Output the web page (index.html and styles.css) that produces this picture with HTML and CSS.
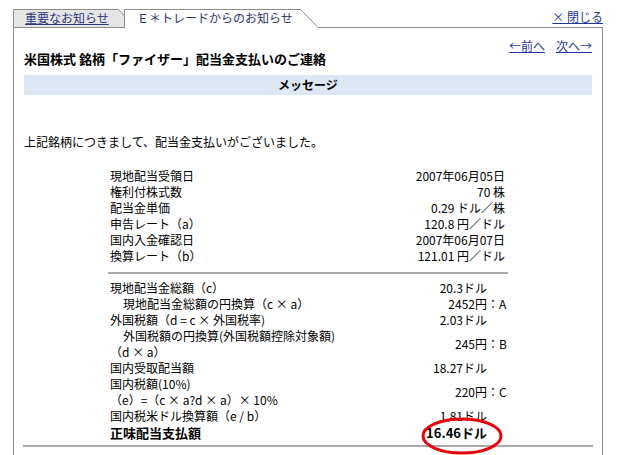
FILE: index.html
```html
<!DOCTYPE html>
<html lang="ja">
<head>
<meta charset="utf-8">
<title>お知らせ</title>
<link rel="stylesheet" href="styles.css">
</head>
<body>
<div class="page">
  <div class="tabbar">
    <div class="tab tab-off">
      <svg class="tab-shape" width="112" height="19" viewBox="0 0 112 19"><polygon points="0.5,18.5 0.5,0.5 105.5,0.5 111.5,7 111.5,18.5" fill="#e6e6e6" stroke="#8c8c8c" stroke-width="1"/></svg>
      <a class="tab-link" href="#">重要なお知らせ</a>
    </div>
    <div class="tab tab-on">
      <svg class="tab-shape" width="194" height="19" viewBox="0 0 194 19"><polygon points="0.5,19 0.5,0.5 176.5,0.5 194,18.5 194,19" fill="#ffffff" stroke="none"/><polyline points="0.5,19 0.5,0.5 176.5,0.5 194,18.5" fill="none" stroke="#8c8c8c" stroke-width="1"/></svg>
      <span class="tab-label">Ｅ＊トレードからのお知らせ</span>
    </div>
    <div class="tab-rest"><a class="link" href="#">×&nbsp;閉じる</a></div>
  </div>

  <div class="panel">
    <div class="nav"><a class="link" href="#">←前へ</a><a class="link next" href="#">次へ→</a></div>
    <h1 class="title">米国株式 銘柄「ファイザー」配当金支払いのご連絡</h1>
    <div class="msgbar">メッセージ</div>
    <p class="lead">上記銘柄につきまして、配当金支払いがございました。</p>

    <table class="detail">
      <colgroup><col class="c-label"><col class="c-value"><col class="c-suffix"></colgroup>
      <tbody class="sec1">
        <tr><td>現地配当受領日</td><td class="val" colspan="2">2007年06月05日</td></tr>
        <tr><td>権利付株式数</td><td class="val" colspan="2">70 株</td></tr>
        <tr><td>配当金単価</td><td class="val" colspan="2">0.29 ドル／株</td></tr>
        <tr><td>申告レート（a）</td><td class="val" colspan="2">120.8 円／ドル</td></tr>
        <tr><td>国内入金確認日</td><td class="val" colspan="2">2007年06月07日</td></tr>
        <tr><td>換算レート（b）</td><td class="val" colspan="2">121.01 円／ドル</td></tr>
      </tbody>
      <tbody>
        <tr class="sep"><td colspan="3"><div class="rule"></div></td></tr>
      </tbody>
      <tbody class="sec2">
        <tr><td>現地配当金総額（c）</td><td class="num">20.3ドル</td><td></td></tr>
        <tr><td class="indent">現地配当金総額の円換算（c × a）</td><td class="num">2452円</td><td class="sfx">：A</td></tr>
        <tr><td>外国税額（d = c × 外国税率)</td><td class="num">2.03ドル</td><td></td></tr>
        <tr><td class="indent-first">外国税額の円換算(外国税額控除対象額)<br>（d × a）</td><td class="num">245円</td><td class="sfx">：B</td></tr>
        <tr><td>国内受取配当額</td><td class="num">18.27ドル</td><td></td></tr>
        <tr><td>国内税額(10%)<br>（e）=（c × a?d × a）× 10%</td><td class="num">220円</td><td class="sfx">：C</td></tr>
        <tr><td>国内税米ドル換算額（e / b）</td><td class="num">1.81ドル</td><td></td></tr>
        <tr class="total"><td>正味配当支払額</td><td class="num mark">16.46ドル<svg class="circle" width="84" height="40" viewBox="0 0 84 40"><ellipse cx="42" cy="19" rx="39" ry="17" fill="none" stroke="#e8000b" stroke-width="3"/></svg></td><td></td></tr>
      </tbody>
    </table>
    <div class="bottom-rule"></div>
  </div>
</div>
</body>
</html>
```

FILE: styles.css
```css
html, body {
  margin: 0;
  padding: 0;
  background: #ffffff;
}

body {
  font-family: "Noto Sans CJK JP", "Noto Sans", sans-serif;
  font-size: 12px;
  color: #000000;
}

.page {
  width: 590px;
  margin-left: 13px;
  padding-top: 9px;
}

.link {
  color: #1f3a9e;
  text-decoration: underline;
}

/* tabs */
.tabbar {
  display: flex;
  height: 19px;
}

.tab {
  position: relative;
  height: 19px;
  line-height: 18px;
  white-space: nowrap;
}

.tab-shape {
  position: absolute;
  left: 0;
  top: 0;
  display: block;
}

.tab-off {
  width: 112px;
}

.tab-on {
  width: 194px;
  margin-left: -1px;
}

.tab-link,
.tab-label {
  position: relative;
  display: block;
  color: #2b3580;
}

.tab-link {
  padding-left: 12px;
  text-decoration: underline;
}

.tab-label {
  padding-left: 13px;
  color: #30336a;
}

.tab-rest {
  flex: 1;
  box-sizing: border-box;
  height: 19px;
  border-bottom: 1px solid #8c8c8c;
  display: flex;
  justify-content: flex-end;
  align-items: flex-end;
  padding-bottom: 3px;
  line-height: 14px;
}

/* panel */
.panel {
  border-left: 1px solid #8c8c8c;
  border-right: 1px solid #8c8c8c;
  padding: 11px 10px 8px;
}

.nav {
  text-align: right;
  line-height: 13px;
}

.nav .next {
  margin-left: 11px;
}

.title {
  margin: 0;
  font-size: 13px;
  line-height: 13px;
  font-weight: bold;
}

.msgbar {
  margin-top: 10px;
  height: 20px;
  line-height: 20px;
  background: #dde8f4;
  text-align: center;
  font-weight: bold;
}

.lead {
  margin: 40px 0 0;
  line-height: 14px;
}

/* detail table */
.detail {
  width: 400px;
  margin: 19px auto 0;
  border-collapse: collapse;
  table-layout: fixed;
}

.c-label { width: 260px; }
.c-value { width: 119px; }
.c-suffix { width: 21px; }

.detail td {
  padding: 0;
  vertical-align: middle;
  white-space: nowrap;
  line-height: 16px;
}

.detail td:first-child {
  padding-left: 2px;
}

.sec1 .val {
  text-align: right;
  padding-right: 3px;
}

.sep td {
  padding: 8px 0 6px;
  line-height: 0;
}

.detail .sep td:first-child {
  padding-left: 0;
}

.rule {
  border-top: 2px solid #a9a9a9;
}

.sec2 .num {
  text-align: right;
}

.sec2 .sfx {
  text-align: left;
}

.detail td.indent {
  padding-left: 15px;
}

.detail td.indent-first {
  text-indent: 13px;
}

.total td {
  font-size: 13px;
  font-weight: bold;
  line-height: 17px;
}

.mark {
  position: relative;
}

.circle {
  position: absolute;
  left: 52px;
  top: -7px;
  display: block;
}

.bottom-rule {
  margin: 4px -1px 0;
  border-top: 2px solid #a9a9a9;
}
```
